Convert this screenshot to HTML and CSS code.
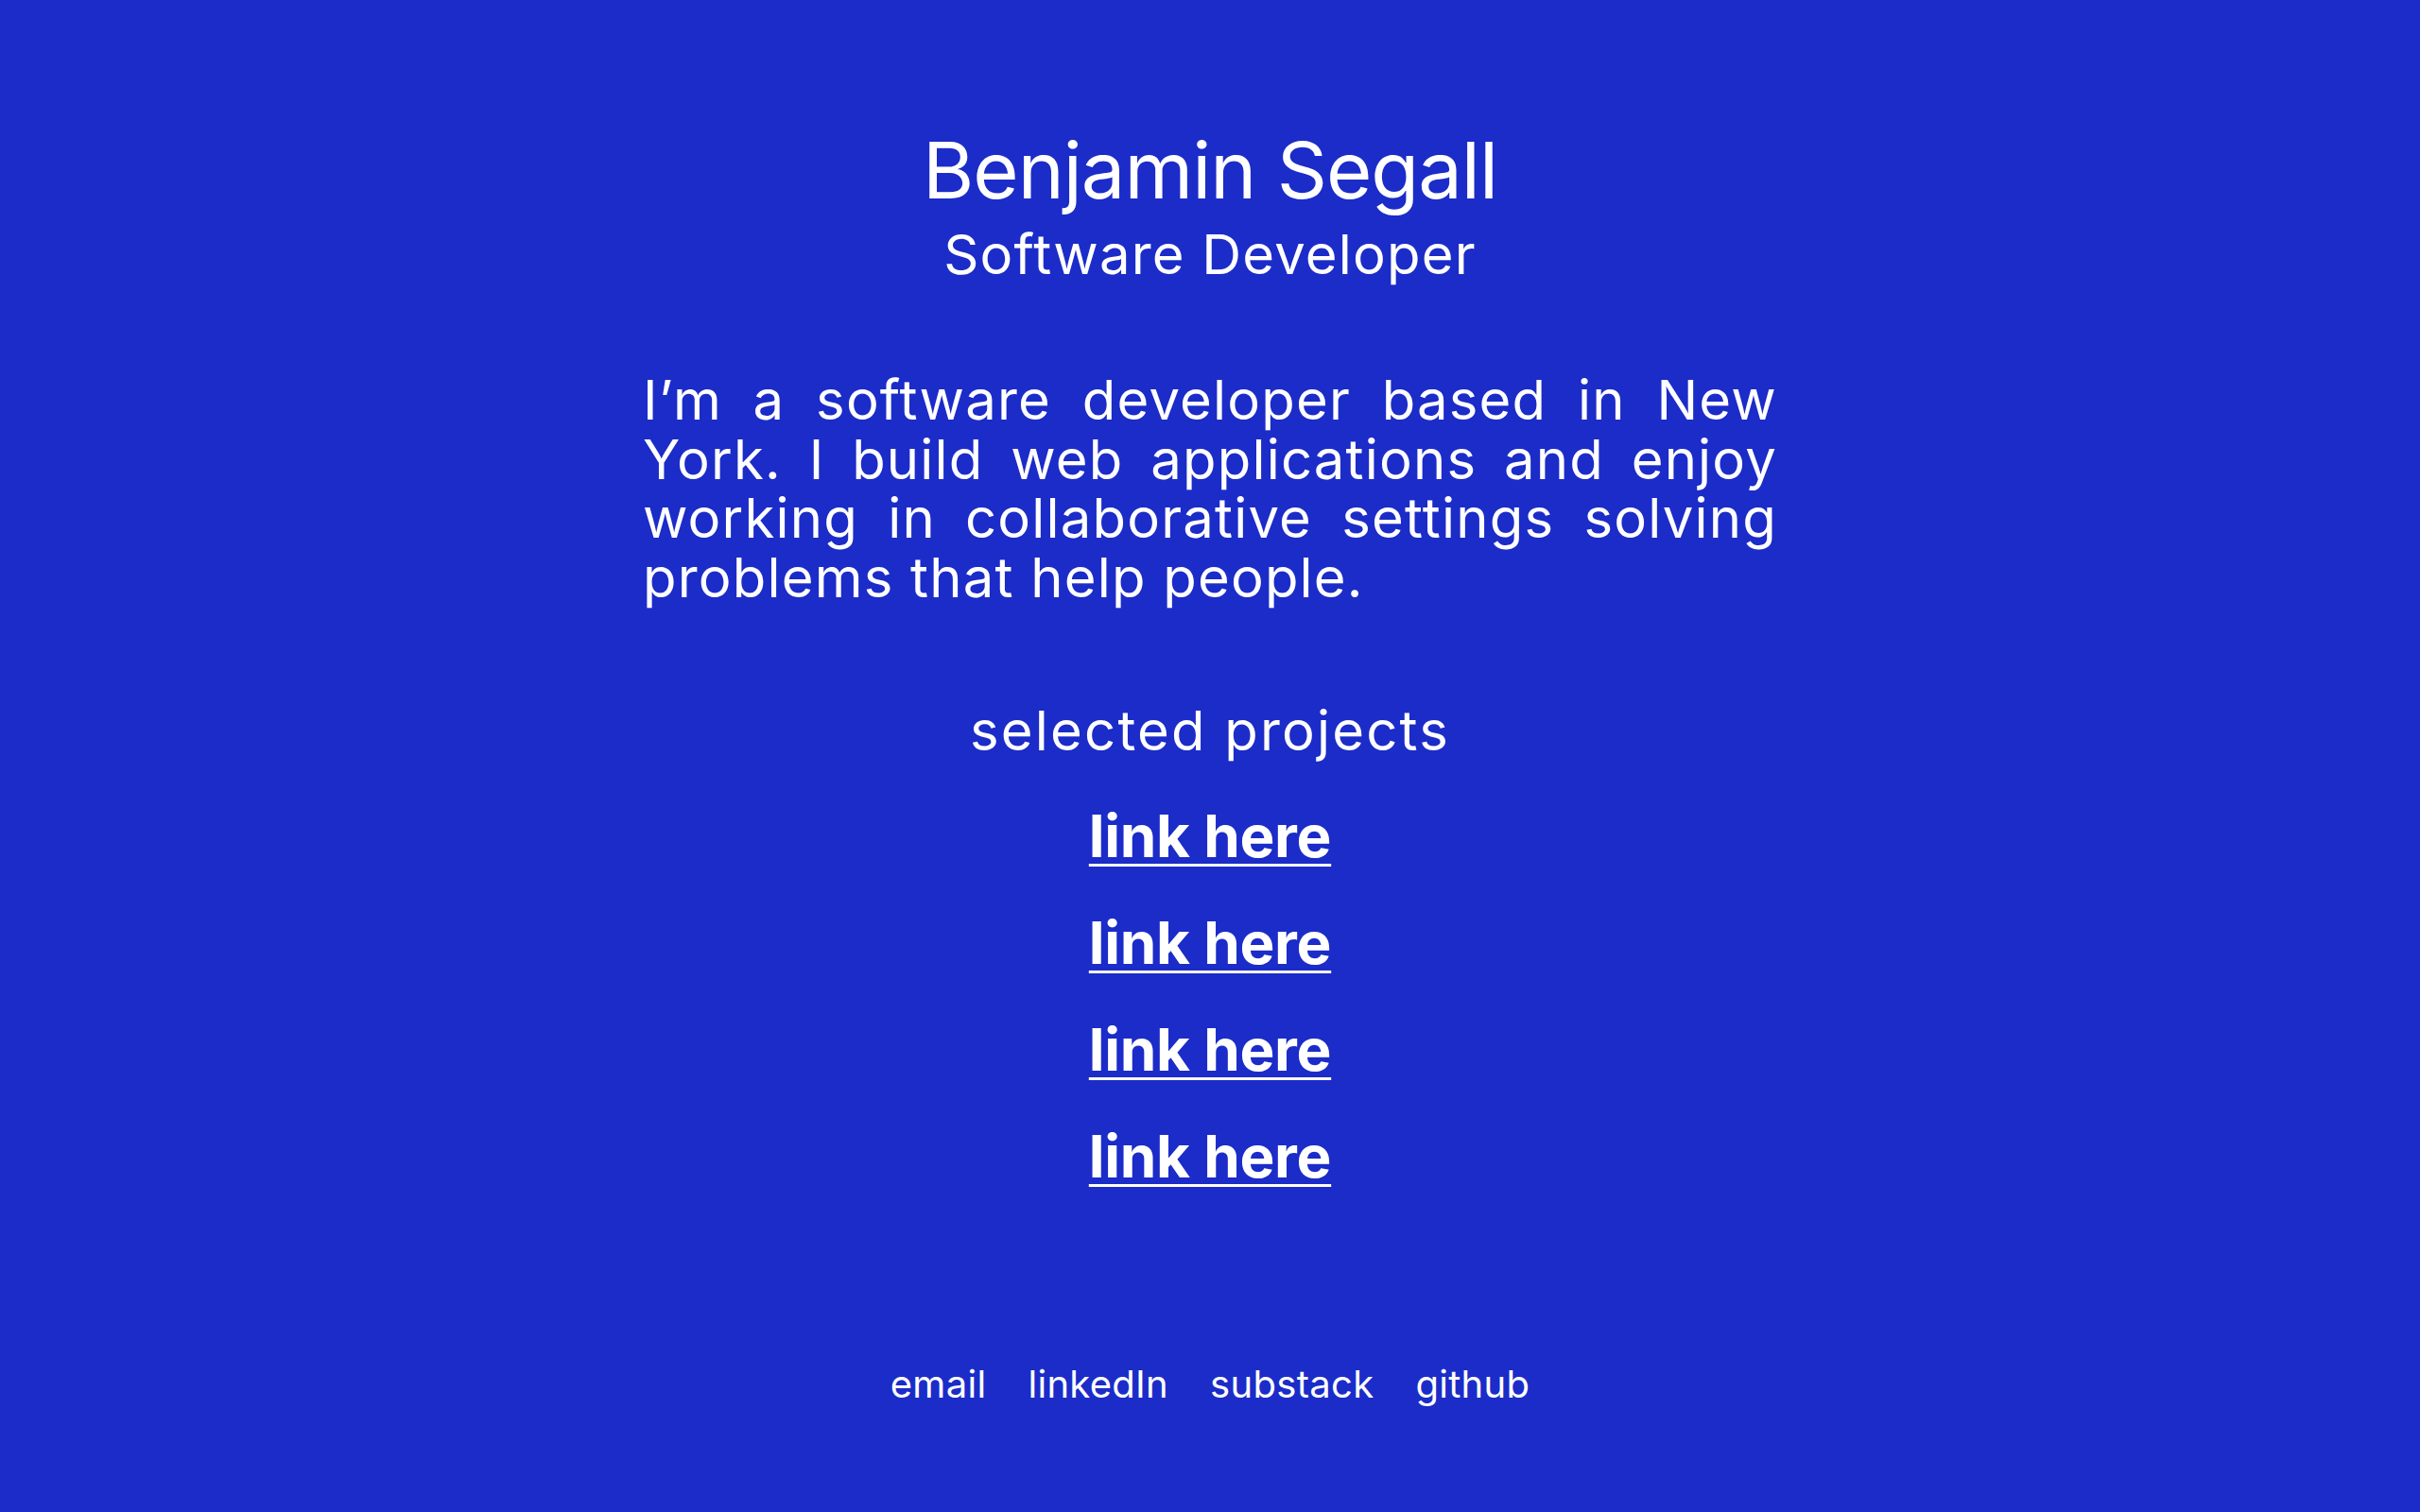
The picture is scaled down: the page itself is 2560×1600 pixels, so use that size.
FILE: index.html
```html
<!DOCTYPE html>
<html lang="en">
<head>
<meta charset="utf-8">
<title>Benjamin Segall</title>
<link rel="stylesheet" href="styles.css">
</head>
<body>
<main class="page">
  <header class="intro">
    <h1 class="name">Benjamin Segall</h1>
    <h2 class="role">Software Developer</h2>
  </header>
  <p class="bio">I’m a software developer based in New York. I build web applications and enjoy working in collaborative settings solving problems that help people.</p>
  <section class="projects">
    <h3 class="projects-title">selected projects</h3>
    <ul class="project-list">
      <li><a class="project-link" href="#">link here</a></li>
      <li><a class="project-link" href="#">link here</a></li>
      <li><a class="project-link" href="#">link here</a></li>
      <li><a class="project-link" href="#">link here</a></li>
    </ul>
  </section>
  <footer class="contact">
    <a href="#">email</a>
    <a href="#">linkedIn</a>
    <a href="#">substack</a>
    <a href="#">github</a>
  </footer>
</main>
</body>
</html>
```
FILE: styles.css
```css
html, body {
  margin: 0;
  padding: 0;
  background: #1b2cc8;
  color: #ffffff;
  font-family: Inter, "Noto Sans", "Liberation Sans", sans-serif;
}

.page {
  display: flex;
  flex-direction: column;
  align-items: center;
  padding-top: 130px;
}

.intro {
  display: flex;
  flex-direction: column;
  align-items: center;
}

.name {
  margin: 0;
  font-size: 83px;
  line-height: 100px;
  font-weight: 400;
  letter-spacing: -1px;
}

.role {
  margin: 4px 0 0;
  font-size: 58px;
  line-height: 70px;
  font-weight: 400;
  letter-spacing: 1.2px;
}

.bio {
  width: 1200px;
  margin: 88px 0 0;
  font-size: 58px;
  line-height: 62.5px;
  font-weight: 400;
  text-align: justify;
  letter-spacing: 1.2px;
}

.projects {
  display: flex;
  flex-direction: column;
  align-items: center;
  margin-top: 96px;
}

.projects-title {
  margin: 0;
  font-size: 58px;
  line-height: 70px;
  font-weight: 400;
  letter-spacing: 2.2px;
}

.project-list {
  list-style: none;
  margin: 37px 0 0;
  padding: 0;
  display: flex;
  flex-direction: column;
  align-items: center;
  gap: 33px;
}

.project-link {
  display: block;
  font-size: 62px;
  line-height: 80px;
  font-weight: 700;
  color: #ffffff;
  text-decoration: underline;
  text-decoration-thickness: 3px;
  text-underline-offset: 7px;
  letter-spacing: -0.3px;
}

.contact {
  display: flex;
  gap: 44px;
  margin-top: 176px;
  font-size: 40px;
  line-height: 50px;
}

.contact a {
  color: #ffffff;
  text-decoration: none;
  letter-spacing: 0.3px;
}
```
